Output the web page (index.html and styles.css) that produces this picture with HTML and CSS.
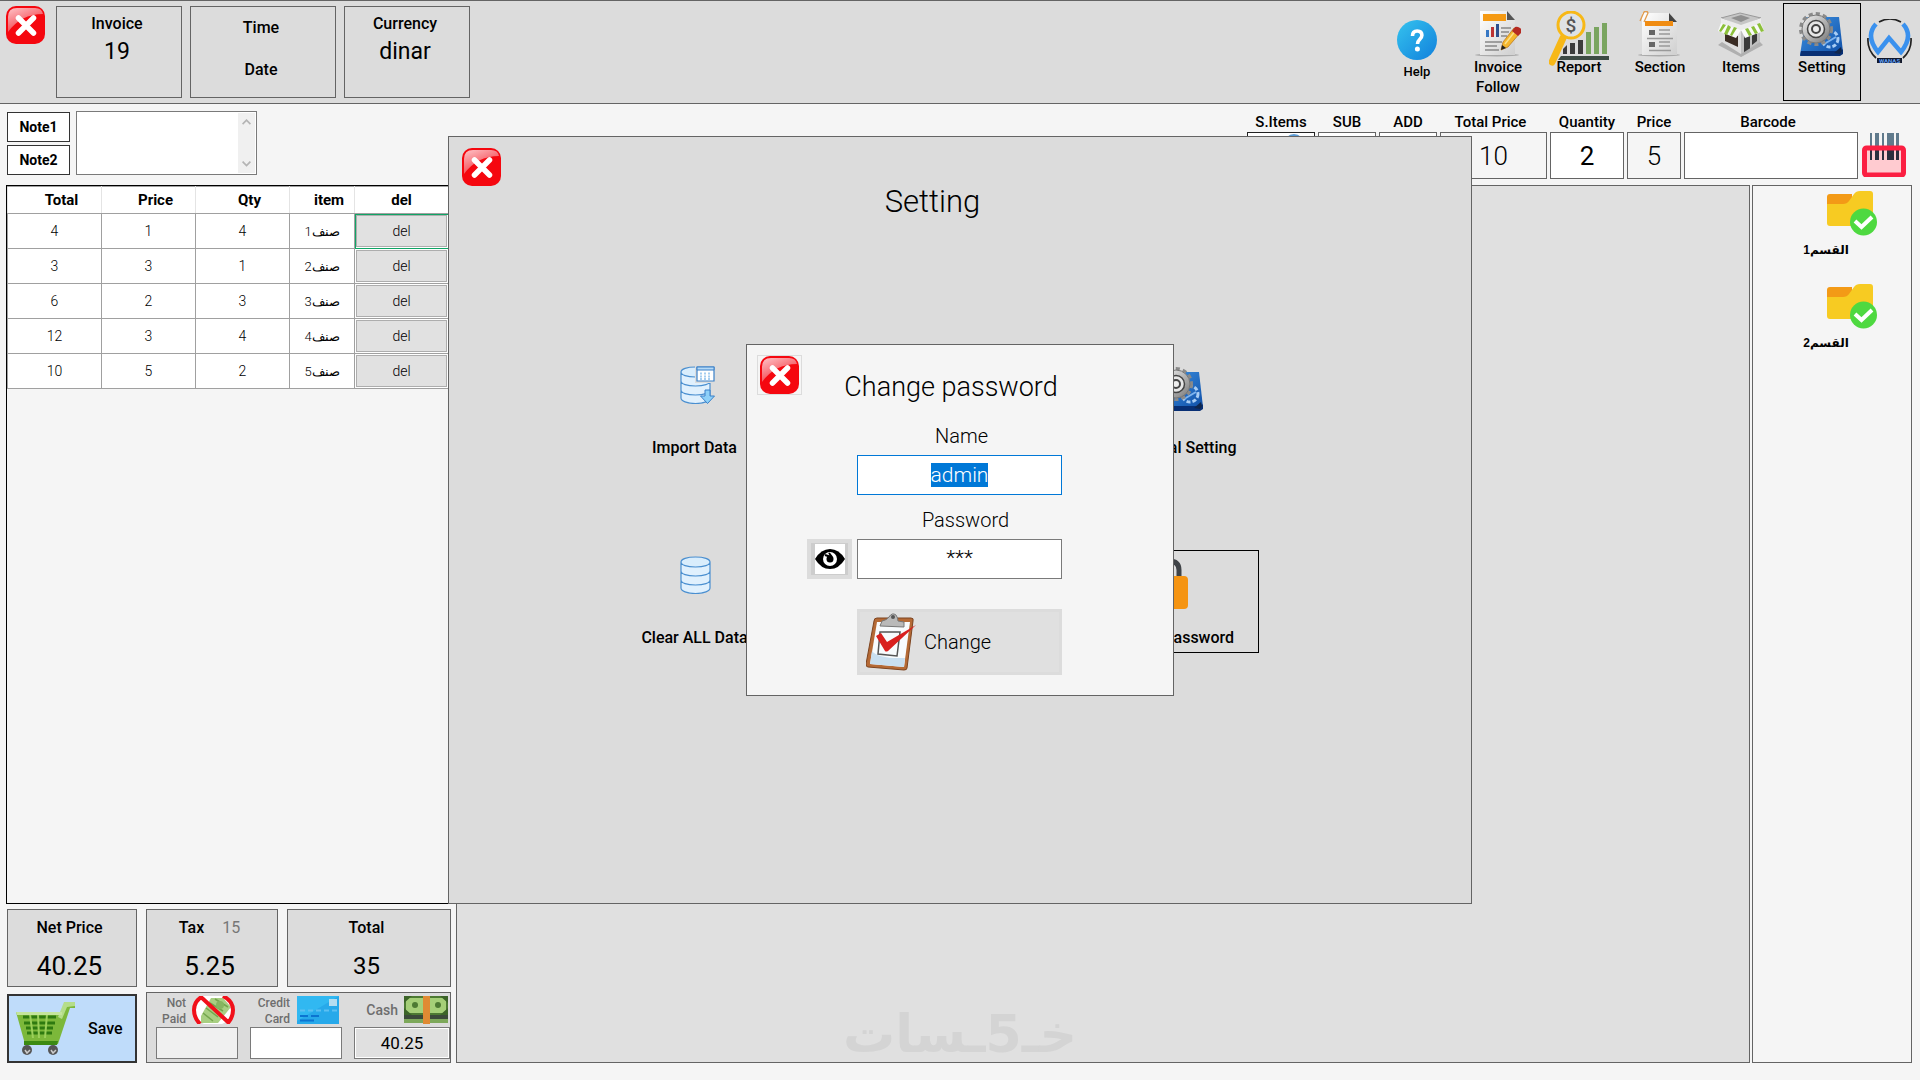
FILE: index.html
```html
<!DOCTYPE html>
<html lang="en">
<head>
  <meta charset="UTF-8">
  <meta name="viewport" content="width=device-width, initial-scale=1.0">
  <title>Point of Sale</title>
  <link rel="stylesheet" href="styles.css">
</head>
<body>

<!-- shared icons -->
<svg class="defs" aria-hidden="true">
  <defs>
    <linearGradient id="shine" x1="0" y1="0" x2="0.6" y2="1">
      <stop offset="0" stop-color="#ffc4c8"/>
      <stop offset="1" stop-color="#f0303a"/>
    </linearGradient>
    <linearGradient id="paper" x1="0" y1="0" x2="1" y2="1">
      <stop offset="0" stop-color="#ffffff"/>
      <stop offset="1" stop-color="#cfcfcf"/>
    </linearGradient>
    <linearGradient id="steel" x1="0" y1="0" x2="1" y2="1">
      <stop offset="0" stop-color="#f4f4f4"/>
      <stop offset="1" stop-color="#777"/>
    </linearGradient>
    <linearGradient id="helpblue" x1="0" y1="0" x2="1" y2="1">
      <stop offset="0" stop-color="#35c3ee"/>
      <stop offset="1" stop-color="#1180dc"/>
    </linearGradient>
    <linearGradient id="bookblue" x1="0" y1="0" x2="1" y2="1">
      <stop offset="0" stop-color="#3f94e4"/>
      <stop offset="1" stop-color="#0f4ea6"/>
    </linearGradient>
  </defs>
  <symbol id="i-close" viewBox="0 0 39 38">
    <rect x="0" y="0" width="39" height="38" rx="10" fill="#f5070f"/>
    <path d="M2 26V11Q2 2 11 2h18q7 0 8 6Q15 8 2 26z" fill="url(#shine)"/>
    <path d="M12.500 12l15 15m0-15l-15 15" stroke="#fff" stroke-width="5.500" stroke-linecap="round"/>
  </symbol>
  <symbol id="i-setting" viewBox="0 0 46 46">
    <path d="M7 6h33l4 35-3 3H1z" fill="url(#bookblue)"/>
    <path d="M2 40h40l2-2v5l-3 2H1z" fill="#082f74"/>
    <path d="M35 42l7-6 1 4-2 3z" fill="#10264c"/>
    <circle cx="31" cy="28" r="8" fill="none" stroke="#a9cdf4" stroke-width="3" stroke-dasharray="4 2"/>
    <path d="M25 33l12-7" stroke="#7eb4ef" stroke-width="2"/>
    <circle cx="17" cy="18" r="15" fill="none" stroke="#8a8a8a" stroke-width="4" stroke-dasharray="4 3"/>
    <circle cx="17" cy="18" r="14" fill="url(#steel)" stroke="#777"/>
    <circle cx="17" cy="18" r="8.500" fill="#e6e6e6" stroke="#444" stroke-width="1.500"/>
    <circle cx="17" cy="18" r="4" fill="#eee" stroke="#444" stroke-width="2"/>
  </symbol>
  <symbol id="i-database" viewBox="0 0 36 38">
    <path d="M1 6v26c0 3 6 5.500 14.500 5.500S30 35 30 32V6z" fill="#e0f0fd"/>
    <ellipse cx="15.500" cy="6" rx="14.500" ry="5" fill="#d9edfc"/>
    <path d="M1 6v26c0 3 6 5.500 14.500 5.500S30 35 30 32V6M1 6c0-3 6-5 14.500-5S30 3 30 6s-6 5-14.500 5S1 9 1 6m0 9c0 3 6 5 14.500 5S30 18 30 15M1 24c0 3 6 5 14.500 5S30 27 30 24" fill="none" stroke="#4a8fd0" stroke-width="1.200"/>
  </symbol>
  <symbol id="i-folder" viewBox="0 0 50 45">
    <path d="M3 3h22v12H0V6q0-3 3-3z" fill="#f39a16"/>
    <path d="M0 13h16q4 0 6-3l5-7q2-3 6-3h10q3 0 3 3v29q0 3-3 3H3q-3 0-3-3z" fill="#f7cb22"/>
    <circle cx="36.500" cy="31" r="13.500" fill="#4ed940"/>
    <path d="M28 30l6.500 6L45 26" fill="none" stroke="#fff" stroke-width="4"/>
  </symbol>
</svg>

<header class="topbar">
  <button class="icon-button" type="button" aria-label="Exit"><svg class="close"><use href="#i-close"/></svg></button>
  <div class="info-box">
    <span class="info-label">Invoice</span>
    <span class="info-value">19</span>
  </div>
  <div class="info-box clock">
    <span class="info-label">Time</span>
    <span class="info-label">Date</span>
  </div>
  <div class="info-box">
    <span class="info-label">Currency</span>
    <span class="info-value">dinar</span>
  </div>

  <nav class="tools">
    <button class="tool help" type="button">
      <svg viewBox="0 0 40 40">
        <circle cx="20" cy="20" r="20" fill="url(#helpblue)"/>
        <path d="M15.500 16q0-5 4.700-5t4.700 4.300c0 4-4.400 4-4.400 8.700" fill="none" stroke="#fff" stroke-width="3.600"/>
        <circle cx="20.400" cy="29" r="2.500" fill="#fff"/>
      </svg>
      <span>Help</span>
    </button>
    <button class="tool" type="button">
      <svg viewBox="0 0 46 46">
        <ellipse cx="22" cy="44" rx="22" ry="1.500" fill="#aaa"/>
        <path d="M5 0h27l8 9v35H5z" fill="url(#paper)"/>
        <path d="M32 0l8 9h-8z" fill="#555"/>
        <rect x="8" y="3" width="23" height="7" fill="#f59a13"/>
        <rect x="11" y="19" width="3" height="7" fill="#3878c4"/>
        <rect x="16" y="16" width="3" height="10" fill="#b33"/>
        <rect x="21" y="13" width="3" height="13" fill="#2d4f8e"/>
        <path d="M26 17h10M26 21h8M26 25h6M10 31h17M10 35h12M10 39h14" stroke="#888" stroke-width="1.500"/>
        <path d="M26 39l2-8L39 17l6 5-12 14z" fill="#f5b62c" stroke="#b3701a" stroke-width="0.700"/>
        <path d="M30 33L41 19" stroke="#fbe08a" stroke-width="1.500"/>
        <path d="M37 20l3-4q2-1 5 1t1 5l-3 3z" fill="#b52a22"/>
        <path d="M26 39l1-5 4 3z" fill="#222"/>
      </svg>
      <span>Invoice Follow</span>
    </button>
    <button class="tool report" type="button">
      <svg viewBox="0 0 61 56">
        <path d="M12 45h48v4H9z" fill="#3d4a44"/>
        <path d="M14 38l4-4v9h-4zM21 32h5v11h-5zM29 29h5v14h-5z" fill="#3c3c3c"/>
        <path d="M37 21h5v22h-5zM45 16h5v27h-5zM53 12h5v31h-5z" fill="#7aa560"/>
        <path d="M14 27L3 51" stroke="#f7b817" stroke-width="7" stroke-linecap="round"/>
        <circle cx="22" cy="14" r="13" fill="#dfe2e4" stroke="#f7b817" stroke-width="3"/>
        <text x="22" y="21" text-anchor="middle" class="dollar">$</text>
      </svg>
      <span>Report</span>
    </button>
    <button class="tool" type="button">
      <svg viewBox="0 0 46 46">
        <ellipse cx="22" cy="44" rx="21" ry="1.500" fill="#aaa"/>
        <path d="M5 2h27l8 9v33H5z" fill="url(#paper)"/>
        <path d="M32 2l8 9h-8z" fill="#444"/>
        <rect x="8" y="10" width="28" height="5" fill="#f08c12"/>
        <path d="M3 10L7 1q3-2 4 1L7 11" fill="none" stroke="#e29a4a" stroke-width="1.300"/>
        <path d="M12 19h6v5h-6zM12 31h6v5h-6z" fill="#666"/>
        <path d="M22 19h11M22 23h11M10 27.500h26M22 31h11M22 35h11M12 39.500h22" stroke="#999" stroke-width="1.300"/>
      </svg>
      <span>Section</span>
    </button>
    <button class="tool" type="button">
      <svg viewBox="0 0 46 46">
        <path d="M4 18h38v16L23 46 4 34z" fill="#dedede"/>
        <path d="M23 20h19v14L23 46z" fill="#c0c0c0"/>
        <path d="M7 20l13 5v11L7 30z" fill="#3a2c24"/>
        <path d="M26 25l6-2v16l-6 3zM34 22l5-2v10l-5 4z" fill="#3a3a3a"/>
        <path d="M3 7L22 2l21 5-20 9z" fill="#c6c6c6" stroke="#999"/>
        <path d="M13 7l10-3 9 3-9 4z" fill="#8f8f8f"/>
        <path d="M3 7l20 7v5L3 12zM43 7l-20 7v5l20-7z" fill="#ececec"/>
        <path d="M3 12l20 7-5 8L0 20zM43 12l-20 7 4 8 19-7z" fill="#fafafa"/>
        <path d="M5 13l3 1-5 7-2-1zM10 14l3 2-4 8-3-1zM16 16l3 1-5 8-2-1zM27 18l3-1 4 7-3 1zM33 16l3-1 4 7-3 1zM39 13l3-1 4 8-3 1z" fill="#8cc03a"/>
        <path d="M0 34l4-3 19 12 19-12 3 3-22 12z" fill="#b0b0b0"/>
      </svg>
      <span>Items</span>
    </button>
    <button class="tool active" type="button">
      <svg><use href="#i-setting"/></svg>
      <span>Setting</span>
    </button>
  </nav>

  <svg class="brand" viewBox="0 0 45 46" role="img" aria-label="WANAS">
    <path d="M12 3q11-6 22 0M1 19q-1 12 8 20M44 19q1 12-8 20" fill="none" stroke="#222" stroke-width="1.700"/>
    <path d="M9 5Q-2 17 11 33l11-14 12 14Q47 17 36 5" fill="none" stroke="#3a91ee" stroke-width="4.500"/>
    <rect x="10" y="39" width="25" height="5" fill="#10182c"/>
    <text x="22.500" y="44" text-anchor="middle" class="brand-text">WANAS</text>
  </svg>
</header>

<section class="entry-bar">
  <div class="note-buttons">
    <button type="button">Note1</button>
    <button type="button">Note2</button>
  </div>
  <div class="note-box">
    <textarea aria-label="Note"></textarea>
    <div class="note-scroll" aria-hidden="true">
      <svg viewBox="0 0 8 5"><path d="M0.500 4.500L4 1l3.500 3.500" fill="none" stroke="#b4b4b4" stroke-width="1.500"/></svg>
      <svg viewBox="0 0 8 5"><path d="M0.500 0.500L4 4 7.500 0.500" fill="none" stroke="#b4b4b4" stroke-width="1.500"/></svg>
    </div>
  </div>

  <div class="fields">
    <div class="field s-items">
      <label for="sitems">S.Items</label>
      <button id="sitems" type="button"><svg viewBox="0 0 20 20"><circle cx="10" cy="10" r="10" fill="#5b9bd5"/></svg></button>
    </div>
    <div class="field step">
      <label for="sub">SUB</label>
      <button id="sub" type="button"></button>
    </div>
    <div class="field step">
      <label for="add">ADD</label>
      <button id="add" type="button"></button>
    </div>
    <div class="field total-price">
      <label for="totalPrice">Total Price</label>
      <input id="totalPrice" type="text" value="10" readonly>
    </div>
    <div class="field quantity">
      <label for="quantity">Quantity</label>
      <input id="quantity" type="text" value="2">
    </div>
    <div class="field price">
      <label for="price">Price</label>
      <input id="price" type="text" value="5" readonly>
    </div>
    <div class="field barcode">
      <label for="barcode">Barcode</label>
      <input id="barcode" type="text">
    </div>
    <svg class="scan" viewBox="0 0 44 44" aria-hidden="true">
      <rect x="3" y="15" width="38" height="27" fill="#ffcbd0"/>
      <path d="M8 0h2v27H8zM13 0h4v27h-4zM20 0h2v27h-2zM25 0h7v27h-7zM34 0h3v27h-3z" fill="#607a8c"/>
      <path d="M8 17h2v10H8zM13 17h4v10h-4zM20 17h2v10h-2zM25 17h7v10h-7zM34 17h3v10h-3z" fill="#2b2f3e"/>
      <rect x="2.500" y="15" width="39" height="27" rx="2" fill="none" stroke="#fb1f42" stroke-width="5"/>
    </svg>
  </div>
</section>

<main class="workspace">
  <div class="invoice">
    <div class="invoice-lines">
      <table>
        <thead>
        <tr>
          <th>Total</th>
          <th>Price</th>
          <th>Qty</th>
          <th class="col-item">item</th>
          <th class="col-del">del</th>
        </tr>
        </thead>
        <tbody>
        <tr><td>4</td><td>1</td><td>4</td><td class="ar" dir="rtl">صنف1</td><td class="del-cell selected"><button type="button">del</button></td></tr>
        <tr><td>3</td><td>3</td><td>1</td><td class="ar" dir="rtl">صنف2</td><td class="del-cell"><button type="button">del</button></td></tr>
        <tr><td>6</td><td>2</td><td>3</td><td class="ar" dir="rtl">صنف3</td><td class="del-cell"><button type="button">del</button></td></tr>
        <tr><td>12</td><td>3</td><td>4</td><td class="ar" dir="rtl">صنف4</td><td class="del-cell"><button type="button">del</button></td></tr>
        <tr><td>10</td><td>5</td><td>2</td><td class="ar" dir="rtl">صنف5</td><td class="del-cell"><button type="button">del</button></td></tr>
        </tbody>
      </table>
    </div>

    <div class="totals">
      <div class="sum-box">
        <span class="info-label">Net Price</span>
        <span class="sum">40.25</span>
      </div>
      <div class="sum-box">
        <span class="info-label">Tax <span class="rate">15</span></span>
        <span class="sum">5.25</span>
      </div>
      <div class="sum-box">
        <span class="info-label">Total</span>
        <span class="sum small">35</span>
      </div>

      <button class="save" type="button">
        <svg viewBox="0 0 60 54">
          <path d="M0 10h46l5-10h8v6h-5L42 42H9z" fill="#7cb83a"/>
          <path d="M48 0h11v4l-8 1-5 12-4-2z" fill="#b5dd8a"/>
          <path d="M7 15h33M8 21h31M10 26h27M11 31h25" stroke="#2f7a10" stroke-width="3"/>
          <path d="M14 12l3 24M22 12l1 24M31 12l-2 24" stroke="#9bd05a" stroke-width="2"/>
          <path d="M0 10h46v3H1z" fill="#c4e59c"/>
          <path d="M8 39h34l-1 4H8z" fill="#3a8a12"/>
          <circle cx="11" cy="48" r="5" fill="#555"/>
          <circle cx="37" cy="48" r="5" fill="#555"/>
          <path d="M9 48l2 3 3-3M35 48l2 3 3-3" fill="none" stroke="#ccc" stroke-width="1.500"/>
        </svg>
        Save
      </button>

      <div class="payment">
        <div class="pay">
          <label for="notPaid">Not<br>Paid</label>
          <svg class="pay-icon" viewBox="0 0 42 28">
            <ellipse cx="20" cy="14" rx="19" ry="16" fill="#fff"/>
            <path d="M8 20L18 2h12l8 9-13 16H8z" fill="#a8cf82"/>
            <path d="M10 17l10 8M13 12l12 9M17 7l13 8M22 3l13 8" stroke="#74a64e" stroke-width="1.500"/>
            <circle cx="27" cy="9" r="4" fill="#86b560"/>
            <path d="M10 0Q1 5 1 14q0 8 6 14M30 0q10 5 10 14 0 8-6 14M8 1l28 26" fill="none" stroke="#f1101a" stroke-width="4"/>
          </svg>
          <input id="notPaid" type="text" class="off">
        </div>
        <div class="pay">
          <label for="credit">Credit<br>Card</label>
          <svg class="pay-icon" viewBox="0 0 42 28">
            <rect width="42" height="28" fill="#27a9ea"/>
            <path d="M0 0h42L0 25z" fill="#31b8f1"/>
            <rect x="32" y="3" width="8" height="7" fill="#b5ddf0"/>
            <path d="M3 14.500h37" stroke="#5cc0f2" stroke-width="2" stroke-dasharray="5 3"/>
            <path d="M3 20h8m3 0h8M3 24.500h14" stroke="#0b74d1" stroke-width="2"/>
          </svg>
          <input id="credit" type="text">
        </div>
        <div class="pay">
          <label for="cash" class="cash-label">Cash</label>
          <svg class="pay-icon" viewBox="0 0 44 28">
            <rect width="44" height="19" fill="#4d7a33"/>
            <rect x="2" y="2" width="40" height="15" fill="#a5cf78"/>
            <path d="M0 0h8L0 7zM44 0h-8l8 7zM0 19v-7l8 7zM44 19v-7l-8 7z" fill="#3c6428"/>
            <circle cx="11" cy="9" r="3" fill="#4d7a33"/>
            <circle cx="34" cy="9" r="3" fill="#4d7a33"/>
            <rect y="19" width="44" height="4" fill="#3b4a3a"/>
            <rect y="23" width="44" height="4" fill="#7da85a"/>
            <rect x="19" width="7" height="28" fill="#e08a33"/>
          </svg>
          <input id="cash" type="text" class="filled" value="40.25">
        </div>
      </div>
    </div>
  </div>

  <div class="items-panel"></div>

  <aside class="sections">
    <button type="button"><svg><use href="#i-folder"/></svg><span dir="rtl">القسم1</span></button>
    <button type="button"><svg><use href="#i-folder"/></svg><span dir="rtl">القسم2</span></button>
  </aside>
</main>

<div class="watermark" dir="rtl">خـ5ـسات</div>

<div class="overlay">
  <section class="setting-window" aria-label="Setting">
    <div class="window-head">
      <button class="icon-button" type="button" aria-label="Close setting"><svg class="close"><use href="#i-close"/></svg></button>
      <h1>Setting</h1>
    </div>
    <div class="setting-grid">
      <button class="setting-tile" type="button">
        <svg viewBox="0 0 36 38" class="db">
          <use href="#i-database" width="36" height="38"/>
          <path d="M15 0h21v17H15z" fill="#dcdcdc"/>
          <path d="M17 1h17v14H17z" fill="#fff" stroke="#3a80c8" stroke-width="1.200"/>
          <path d="M17 1h17v3H17z" fill="#b5daf7" stroke="#3a80c8"/>
          <path d="M20 7.500h11M20 10.500h11M20 13h11" stroke="#a5cdf0" stroke-width="1.800" stroke-dasharray="2 2"/>
          <path d="M25 24h5v6h4.500L27.500 37.500 20.500 30H25z" fill="#8dd0f8" stroke="#3a80c8"/>
        </svg>
        <span>Import Data</span>
      </button>
      <button class="setting-tile" type="button">
        <svg><use href="#i-setting"/></svg>
        <span>General Setting</span>
      </button>
      <button class="setting-tile" type="button">
        <svg class="db"><use href="#i-database"/></svg>
        <span>Clear ALL Data</span>
      </button>
      <button class="setting-tile selected" type="button">
        <svg class="lock" viewBox="0 0 46 54">
          <path d="M12 24V14q0-9 10-9t10 9v10" fill="none" stroke="#3f4347" stroke-width="5"/>
          <rect x="3" y="20" width="38" height="33" rx="4" fill="#f59412"/>
        </svg>
        <span>Change Password</span>
      </button>
    </div>
  </section>

  <section class="password-window" role="dialog" aria-labelledby="pwTitle">
    <div class="window-head">
      <button class="icon-button framed" type="button" aria-label="Close"><svg class="close"><use href="#i-close"/></svg></button>
      <h2 id="pwTitle">Change password</h2>
    </div>
    <form class="password-form">
      <label for="userName">Name</label>
      <input id="userName" type="text" value="admin" autocomplete="off">
      <label for="userPass">Password</label>
      <button class="eye" type="button" aria-label="Show password">
        <svg viewBox="0 0 30 30">
          <rect width="30" height="30" fill="#fff"/>
          <path d="M0 15Q6 5 15 5t15 10Q24 25 15 25T0 15z" fill="#000"/>
          <circle cx="15" cy="15" r="7" fill="#fff"/>
          <circle cx="15" cy="15" r="3.500" fill="#000"/>
          <path d="M10 11l6 2M14 9l3 4" stroke="#000" stroke-width="2"/>
        </svg>
      </button>
      <input id="userPass" type="text" class="masked" value="***" autocomplete="off">
      <button class="change" type="button">
        <svg viewBox="0 0 52 58">
          <path d="M11 5h34q3 0 2 3l-6 47q0 2-3 2L2 54q-2 0-2-3L8 8q0-3 3-3z" fill="#b56a36" stroke="#7d4420"/>
          <path d="M11 9h33l-6 45-34-3z" fill="#f8fbfd"/>
          <path d="M6 38q6 8 33 7l-1 9-34-3z" fill="#c9dff0"/>
          <path d="M14 19h20l-3 24-19-2z" fill="none" stroke="#555" stroke-width="1.500"/>
          <path d="M16 8q5-1 7-4 3-5 7-2 2 3 2 6l6 1v5l-24-1z" fill="#b9b9b9" stroke="#777"/>
          <circle cx="27" cy="4" r="2" fill="#555"/>
          <path d="M10 23l5-3 6 9L50 12 22 38q-2 1-3 0z" fill="#d9201f"/>
        </svg>
        Change
      </button>
    </form>
  </section>
</div>

<script>
  // The name is ready to be overwritten when the dialog opens
  const userName = document.getElementById("userName");
  userName.focus();
  userName.select();
</script>
</body>
</html>
```
FILE: styles.css
```css
* {
  box-sizing: border-box;
}

body {
  margin: 0;
  min-height: 100vh;
  display: flex;
  flex-direction: column;
  position: relative;
  background-color: #f5f5f5;
  color: #000;
  font-family: Roboto, "DejaVu Sans", sans-serif;
  font-size: 15px;
}

button, input, textarea {
  font-family: inherit;
  font-size: inherit;
  color: inherit;
  margin: 0;
  padding: 0;
  border-radius: 0;
}

input {
  width: 100%;
  text-align: center;
  border: 1px solid #7a7a7a;
  background-color: #fff;
}

svg {
  display: block;
  flex: none;
}

.defs {
  position: absolute;
  width: 0;
  height: 0;
}

/* top bar */
.topbar {
  display: flex;
  align-items: flex-start;
  height: 104px;
  padding: 2px 8px 0 6px;
  background-color: #dcdcdc;
  border-top: 1px solid #646464;
  border-bottom: 1px solid #646464;
}

.icon-button {
  border: none;
  background: none;
  flex: none;
}

.close {
  width: 39px;
  height: 38px;
}

.topbar .icon-button {
  margin: 3px 3px 0 0;
}

.info-box {
  width: 126px;
  height: 92px;
  margin: 3px 0 0 8px;
  padding: 7px 4px 0 0;
  border: 1px solid #646464;
  display: flex;
  flex-direction: column;
  align-items: center;
}

.info-box.clock {
  width: 146px;
  padding-top: 11px;
  gap: 22px;
}

.info-label {
  font-size: 16px;
  font-weight: 500;
  line-height: 20px;
}

.info-value {
  font-size: 23px;
  line-height: 36px;
}

.tools {
  display: flex;
  gap: 3px;
  margin-left: auto;
}

.tool {
  width: 78px;
  height: 98px;
  padding: 7px 4px 0;
  border: 1px solid transparent;
  background: none;
  font-weight: 500;
  line-height: 20px;
  display: flex;
  flex-direction: column;
  align-items: center;
}

.tool svg {
  width: 46px;
  height: 46px;
}

.tool.active {
  border-color: #000;
}

.tool.help {
  padding-top: 16px;
  font-size: 13px;
  gap: 2px;
}

.tool.help svg {
  width: 40px;
  height: 40px;
}

.tool.report svg {
  width: 61px;
  height: 56px;
  margin-bottom: -10px;
}

.tool.report span {
  position: relative;
}

.dollar {
  font-size: 19px;
  fill: #555;
}

.brand {
  width: 45px;
  height: 46px;
  margin: 16px 0 0 6px;
}

.brand-text {
  font-size: 6px;
  font-weight: 700;
  fill: #5f9df0;
}

/* notes and product entry */
.entry-bar {
  display: flex;
  height: 81px;
  padding: 7px 8px 0 7px;
  gap: 6px;
}

.note-buttons {
  display: flex;
  flex-direction: column;
  gap: 3px;
  padding-top: 1px;
}

.note-buttons button {
  width: 63px;
  height: 30px;
  border: 1px solid #333;
  background-color: #fff;
  font-size: 14px;
  font-weight: 700;
}

.note-box {
  width: 181px;
  height: 64px;
  padding: 1px;
  border: 1px solid #7a7a7a;
  background-color: #fff;
  display: flex;
}

.note-box textarea {
  flex: 1;
  min-width: 0;
  border: none;
  resize: none;
  overflow: hidden;
}

.note-scroll {
  width: 17px;
  padding: 6px 4px;
  background-color: #f0f0f0;
  display: flex;
  flex-direction: column;
  justify-content: space-between;
}

.fields {
  display: flex;
  align-items: flex-start;
  gap: 3px;
  margin-left: auto;
  padding-top: 1px;
}

.field {
  display: flex;
  flex-direction: column;
}

.field label {
  font-weight: 500;
  line-height: 20px;
  text-align: center;
  white-space: nowrap;
}

.field input, .field button {
  height: 47px;
  border: 1px solid #646464;
  background-color: #fff;
  font-size: 26px;
  font-weight: 300;
}

.field input[readonly] {
  background-color: #f5f5f5;
}

.field.s-items { width: 68px; }
.field.step { width: 58px; }
.field.total-price { width: 107px; }
.field.quantity { width: 74px; }
.field.price { width: 54px; }
.field.barcode { width: 174px; }

.s-items button {
  border-color: #222;
  padding-left: 36px;
}

.s-items svg {
  width: 20px;
  margin-bottom: 24px;
}

.field.total-price label, .field.barcode label {
  padding-right: 6px;
}

.quantity input {
  font-weight: 400;
}

.scan {
  width: 44px;
  height: 44px;
  margin: 21px 6px 0 1px;
}

/* workspace */
.workspace {
  flex: 1;
  display: grid;
  grid-template-columns: 445px 1fr 160px;
  padding: 0 8px 17px 6px;
}

.invoice {
  display: flex;
  flex-direction: column;
}

.invoice-lines {
  flex: 1;
  border: 1px solid #000;
}

table {
  width: 442px;
  table-layout: fixed;
  border-collapse: collapse;
  background-color: #fff;
  font-size: 14px;
}

th {
  height: 27px;
  padding: 0 0 0 14px;
  border: 1px solid #a0a0a0;
  border-left-color: #e4e4e4;
  border-right-color: #e4e4e4;
  font-size: 15px;
  font-weight: 700;
}

.col-item { width: 65px; }
.col-del { padding: 0; }

td {
  height: 35px;
  padding: 0;
  border: 1px solid #a0a0a0;
  text-align: center;
  font-weight: 300;
}

td.ar {
  font-size: 13px;
}

.del-cell button {
  display: block;
  width: calc(100% - 2px);
  height: 32px;
  margin: 1px;
  border: 1px solid #adadad;
  background-color: #e1e1e1;
  font-weight: 300;
}

.del-cell.selected {
  outline: 1px solid #10a566;
  outline-offset: -1px;
}

.totals {
  display: grid;
  grid-template-columns: 130px 132px 1fr;
  gap: 5px 9px;
  padding: 5px 0 0 1px;
}

.sum-box {
  height: 78px;
  padding: 8px 5px 0 0;
  border: 1px solid #646464;
  background-color: #dcdcdc;
  display: flex;
  flex-direction: column;
  align-items: center;
  gap: 14px;
}

.rate {
  margin-left: 14px;
  font-weight: 400;
  color: #777;
}

.sum {
  font-size: 26px;
  line-height: 28px;
}

.sum.small {
  font-size: 24px;
}

.save {
  margin-top: 2px;
  padding-left: 7px;
  border: 2px solid #333;
  background-color: #bfdcfa;
  font-size: 16px;
  font-weight: 500;
  display: flex;
  align-items: center;
  gap: 12px;
}

.save svg {
  width: 60px;
  height: 54px;
}

.payment {
  grid-column: span 2;
  height: 71px;
  padding: 2px 0 3px 9px;
  border: 1px solid #646464;
  background-color: #dcdcdc;
  display: grid;
  grid-template-columns: 82px 92px 1fr;
  gap: 12px;
}

.pay {
  display: grid;
  grid-template-columns: 1fr auto;
  grid-template-rows: 32px 32px;
  column-gap: 6px;
}

.pay label {
  color: #6e6e6e;
  font-size: 12px;
  font-weight: 500;
  line-height: 16px;
  text-align: right;
}

.pay .cash-label {
  font-size: 14px;
  line-height: 30px;
}

.pay-icon {
  width: 44px;
  height: 28px;
  margin: 1px 2px 0 0;
}

.pay input {
  grid-column: span 2;
}

.pay .off {
  background-color: #f0f0f0;
}

.pay .filled {
  background-color: #e0e0e0;
  border: 1px solid #7a7a7a;
  box-shadow: inset 0 0 0 1px #fff;
  font-size: 17px;
}

.items-panel {
  margin: 0 2px 0 5px;
  border: 1px solid #646464;
  background-color: #e0e0e0;
}

.sections {
  padding: 5px 12px 0 0;
  border: 1px solid #646464;
  display: flex;
  flex-direction: column;
  gap: 24px;
}

.sections button {
  height: 69px;
  border: none;
  background: none;
  font-family: "Liberation Sans", "DejaVu Sans", sans-serif;
  font-size: 12px;
  font-weight: 700;
  line-height: 20px;
  display: flex;
  flex-direction: column;
  align-items: center;
  gap: 4px;
}

.sections svg {
  width: 50px;
  height: 45px;
  margin-left: 52px;
}

.watermark {
  position: absolute;
  left: 0;
  right: 0;
  bottom: 16px;
  text-align: center;
  color: #d4d4d4;
  font-family: "DejaVu Sans", sans-serif;
  font-size: 52px;
  font-weight: 700;
  line-height: 60px;
}

/* windows above the workspace */
.overlay {
  position: absolute;
  inset: 0;
  padding-bottom: 40px;
  display: grid;
  place-items: center;
}

.setting-window, .password-window {
  grid-area: 1 / 1;
  border: 1px solid #646464;
}

.setting-window {
  width: 1024px;
  height: 768px;
  padding: 11px 13px;
  background-color: #dcdcdc;
}

.window-head {
  display: flex;
  align-items: flex-start;
}

h1, h2 {
  flex: 1;
  margin: 0;
  font-weight: 300;
  text-align: center;
}

h1 {
  margin-top: 34px;
  padding-right: 94px;
  font-size: 31px;
  line-height: 40px;
}

.setting-grid {
  margin: 138px 199px 0 155px;
  display: grid;
  grid-template-columns: 155px 155px;
  justify-content: space-between;
  row-gap: 87px;
}

.setting-tile {
  height: 103px;
  padding: 5px 0 4px;
  border: 1px solid transparent;
  background: none;
  font-size: 16px;
  font-weight: 500;
  line-height: 20px;
  white-space: nowrap;
  display: flex;
  flex-direction: column;
  align-items: center;
  justify-content: space-between;
}

.setting-tile svg {
  width: 46px;
  height: 46px;
}

.setting-tile .db {
  width: 36px;
  height: 38px;
  margin-left: 6px;
}

.setting-tile .lock {
  width: 46px;
  height: 54px;
}

.setting-tile.selected {
  padding-right: 24px;
  border-color: #000;
}

.password-window {
  width: 428px;
  height: 352px;
  padding: 10px;
  background-color: #f5f5f5;
}

.icon-button.framed {
  padding: 0 2px;
  border: 1px solid #dcdcdc;
}

h2 {
  margin-top: 16px;
  padding-right: 63px;
  font-size: 27px;
  line-height: 32px;
}

.password-form {
  margin: 18px 0 0 50px;
  display: grid;
  grid-template-columns: 45px 205px;
  gap: 4px 5px;
  font-size: 20px;
  font-weight: 300;
}

.password-form label, .password-form input, .change {
  grid-column: 2;
}

.password-form label {
  line-height: 30px;
  text-align: center;
  padding-left: 4px;
}

.password-form input {
  height: 40px;
  font-size: 21px;
  font-weight: 300;
}

.password-form input:focus {
  outline: none;
  border-color: #0078d7;
}

.password-form input::selection {
  background-color: #0078d7;
  color: #fff;
}

.password-form label[for="userPass"] {
  margin-top: 6px;
  padding-left: 12px;
}

.password-form .masked {
  padding-bottom: 2px;
}

.eye {
  grid-column: 1;
  border: 4px solid #dcdcdc;
  background-color: #cdcdcd;
  display: grid;
  place-items: center;
}

.eye svg {
  width: 30px;
  height: 30px;
}

.change {
  height: 66px;
  margin-top: 26px;
  padding-left: 6px;
  border: 3px solid #dcdcdc;
  background-color: #e0e0e0;
  font-weight: 300;
  display: flex;
  align-items: center;
  gap: 6px;
}

.change svg {
  width: 52px;
  height: 58px;
}
```
